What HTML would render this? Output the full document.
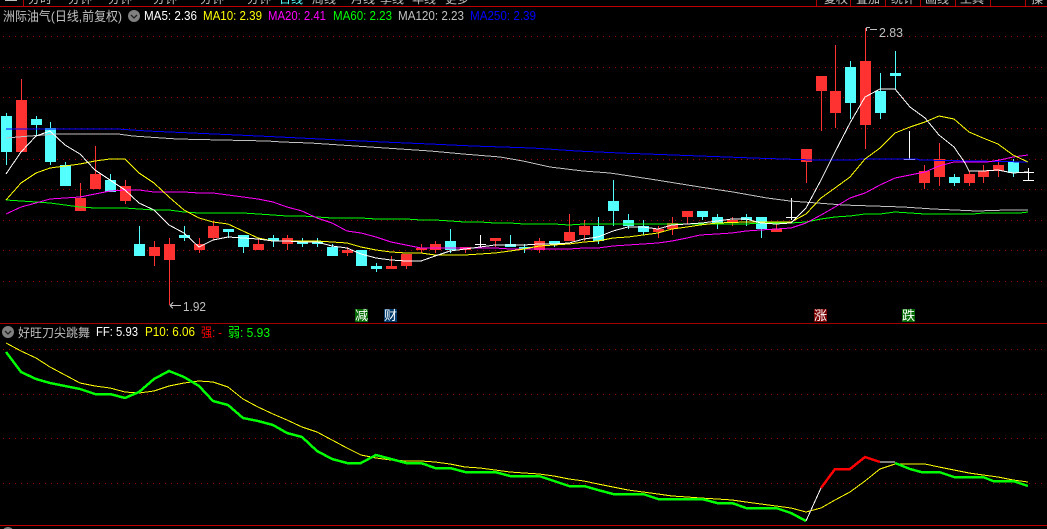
<!DOCTYPE html>
<html><head><meta charset="utf-8"><style>
html,body{margin:0;padding:0;background:#000;width:1047px;height:529px;overflow:hidden}
svg{display:block}
text{font-family:"Liberation Sans","WenQuanYi Zen Hei","Noto Sans CJK SC",sans-serif}
.l{fill:none;shape-rendering:crispEdges;stroke-linejoin:miter}
.g{stroke:#a00000;stroke-width:1;stroke-dasharray:1 5;shape-rendering:crispEdges}
</style></head><body>
<svg width="1047" height="529" viewBox="0 0 1047 529" xmlns="http://www.w3.org/2000/svg">
<defs><clipPath id="t"><rect x="0" y="0" width="1047" height="6"/></clipPath><clipPath id="b"><rect x="0" y="526" width="1047" height="3"/></clipPath></defs>
<rect width="1047" height="529" fill="#000"/>
<g clip-path="url(#t)" font-size="12" fill="#c0c0c0">
<rect x="5" y="0" width="12" height="1" fill="#c0c0c0"/>
<text x="28" y="3">分时</text><text x="68" y="3">分钟</text><text x="108" y="3">分钟</text><text x="153" y="3">分钟</text><text x="200" y="3">分钟</text><text x="247" y="3">分钟</text><text x="279" y="3" fill="#54ffff">日线</text><text x="312" y="3">周线</text><text x="351" y="3">月线</text><text x="380" y="3">季线</text><text x="412" y="3">年线</text><text x="445" y="3">更多</text>
<text x="824" y="3">复权</text><text x="856" y="3">叠加</text><text x="891" y="3">统计</text><text x="925" y="3">画线</text><text x="960" y="3">工具</text><text x="1031" y="3">操</text>
</g>
<g shape-rendering="crispEdges" fill="#b00000">
<rect x="0" y="6" width="1047" height="1" fill="#c00000"/>
<rect x="23" y="0" width="1" height="6"/><rect x="816" y="0" width="1" height="6"/><rect x="850" y="0" width="1" height="6"/><rect x="885" y="0" width="1" height="6"/><rect x="920" y="0" width="1" height="6"/><rect x="955" y="0" width="1" height="6"/><rect x="990" y="0" width="1" height="6"/><rect x="1025" y="0" width="1" height="6"/>
<rect x="0" y="323" width="1047" height="1" fill="#a00000"/>
<rect x="0" y="525" width="1047" height="1" fill="#c00000"/>
</g>
<path class="g" d="M3 36.500H1047M3 67.500H1047M3 97.500H1047M3 128.500H1047M3 159.500H1047M3 189.500H1047M3 220.500H1047M3 250.500H1047M3 281.500H1047M3 349.500H1047M3 394.500H1047M3 438.500H1047M3 483.500H1047"/>

<!-- wicks -->
<path class="l" stroke="#54ffff" d="M6.500 113V165M36.500 116V136M50.500 122V165M65.500 162V186M110.500 174V192M139.500 226V256M184.500 226V241M228.500 229V238M243.500 235V253M273.500 235V247M302.500 238V247M317.500 238V247M332.500 244V256M361.500 250V266M376.500 263V272M450.500 229V253M510.500 235V247M524.500 244V253M554.500 241V247M598.500 217V244M613.500 180V226M628.500 214V229M643.500 220V235M702.500 211V220M717.500 214V229M746.500 214V226M761.500 217V238M850.500 61V119M880.500 73V119M895.500 51V90M954.500 174V186M1013.500 159V177"/>
<path class="l" stroke="#ff3232" d="M21.500 79V152M80.500 183V211M95.500 146V189M125.500 180V204M154.500 241V266M169.500 238V305M199.500 238V253M213.500 221V240M258.500 238V250M287.500 235V250M347.500 247V256M391.500 256V269M406.500 254V269M421.500 244V253M435.500 241V253M465.500 247V253M495.500 238V247M539.500 238V253M569.500 214V241M584.500 220V241M658.500 226V238M672.500 217V235M687.500 211V224M732.500 217V226M776.500 224V232M806.500 149V183M821.500 91V131M835.500 45V128M865.500 28V149M924.500 165V189M939.500 143V186M969.500 171V186M983.500 165V183M998.500 159V177"/>
<!-- bodies -->
<path shape-rendering="crispEdges" fill="#54ffff" d="M1 116h11V152h-11zM31 119h11V125h-11zM45 128h11V162h-11zM60 165h11V186h-11zM105 180h11V192h-11zM134 244h11V256h-11zM179 235h11V238h-11zM223 229h11V232h-11zM238 235h11V247h-11zM268 238h11V241h-11zM297 241h11V244h-11zM312 241h11V244h-11zM327 247h11V256h-11zM356 250h11V266h-11zM371 266h11V269h-11zM445 241h11V250h-11zM505 244h11V247h-11zM519 247h11V249h-11zM549 241h11V244h-11zM593 226h11V241h-11zM608 201h11V211h-11zM623 220h11V226h-11zM638 226h11V232h-11zM697 211h11V217h-11zM712 217h11V223h-11zM741 217h11V220h-11zM756 217h11V229h-11zM845 67h11V103h-11zM875 91h11V113h-11zM890 73h11V76h-11zM949 177h11V183h-11zM1008 162h11V173h-11z"/>
<path shape-rendering="crispEdges" fill="#ff3232" d="M16 100h11V152h-11zM75 198h11V211h-11zM90 174h11V189h-11zM120 186h11V201h-11zM149 247h11V256h-11zM164 244h11V260h-11zM194 244h11V250h-11zM208 226h11V238h-11zM253 244h11V250h-11zM282 238h11V244h-11zM342 250h11V253h-11zM386 266h11V269h-11zM401 254h11V266h-11zM416 248h11V250h-11zM430 244h11V250h-11zM460 247h11V250h-11zM490 238h11V241h-11zM534 241h11V250h-11zM564 232h11V241h-11zM579 226h11V235h-11zM653 229h11V232h-11zM667 223h11V229h-11zM682 211h11V217h-11zM727 220h11V223h-11zM771 229h11V232h-11zM801 149h11V162h-11zM816 76h11V91h-11zM830 91h11V113h-11zM860 61h11V125h-11zM919 171h11V183h-11zM934 159h11V177h-11zM964 174h11V183h-11zM978 171h11V177h-11zM993 165h11V171h-11z"/>
<path class="l" stroke="#fff" d="M480.500 235V248M475 244.500H486M791.500 198V220M786 217.500H797M909.500 131V159M904 159.500H915M1028.500 168V180M1023 180.500H1034M1023 172.500H1034"/>

<!-- MA250 -->
<polyline class="l" stroke="#0000ff" stroke-width="1" points="6,129 117,129 147,131 192,133 237,135 280,137 340,140 383,142 430,144 473,146 532,148 577,151 620,153 700,156 753,158 813,160 857,160 860,159 917,159 920,160 1027,162"/>
<!-- MA120 -->
<polyline class="l" stroke="#c0c0c0" stroke-width="1" points="6,138 30,136 58,134 118,134 133,136 162,138 177,139 221,140 267,141 282,142 310,143 340,145 370,147 400,149 430,151 463,154 500,157 523,161 550,167 583,171 610,173 650,179 700,187 733,192 767,198 790,201 817,203 843,205 873,206 903,207 933,209 977,211 1007,210 1028,210"/>
<!-- MA60 -->
<polyline class="l" stroke="#00ff00" stroke-width="1" points="6,200 21,201 36,202 50,203 65,205 80,207 95,208 125,208 139,209 154,210 169,210 184,212 199,213 243,213 258,214 273,215 287,216 302,216 317,217 332,218 361,218 376,219 406,219 421,220 435,220 450,221 465,222 480,222 495,223 510,223 524,224 554,224 569,225 584,224 746,224 761,223 791,223 806,222 821,219 835,217 850,216 865,214 880,214 895,212 910,213 925,214 973,214 983,213 1020,213 1028,212"/>
<!-- MA20 -->
<polyline class="l" stroke="#ff00ff" stroke-width="1" points="6,214 21,207 36,203 50,199 65,198 80,197 95,194 110,191 125,190 139,190 154,192 184,192 199,193 213,193 228,195 243,197 258,199 273,202 287,207 302,211 317,218 332,223 347,231 361,233 376,237 391,242 406,245 421,248 495,248 510,249 569,249 584,248 598,248 613,246 628,245 643,244 658,243 672,241 687,238 700,235 717,234 732,233 746,231 761,230 776,229 791,228 806,223 821,215 835,207 850,198 865,193 880,185 895,178 910,175 925,172 939,166 954,162 987,162 1000,160 1013,157 1028,155"/>
<!-- MA10 -->
<polyline class="l" stroke="#ffff00" stroke-width="1" points="6,200 21,183 36,173 50,168 65,166 80,164 95,161 110,159 125,159 139,173 154,183 169,197 184,210 199,218 213,222 228,224 243,231 258,238 273,241 317,241 332,242 347,243 361,247 376,250 391,252 406,253 421,253 435,255 465,255 480,254 495,253 510,251 524,249 539,246 554,245 569,244 584,242 598,241 613,238 628,237 643,235 658,233 672,229 687,227 700,225 717,223 746,222 791,222 806,214 821,198 835,188 850,177 865,159 880,148 895,133 910,127 925,122 939,116 954,119 969,132 983,138 998,144 1013,155 1028,162"/>
<!-- MA5 -->
<polyline class="l" stroke="#ffffff" stroke-width="1" points="6,174 21,152 36,136 50,131 65,145 80,154 95,170 110,180 125,190 139,203 154,210 169,225 184,233 199,247 213,240 228,237 243,238 258,239 273,241 287,241 302,242 317,242 332,246 347,248 361,254 376,258 391,260 406,261 421,261 435,256 450,251 465,249 480,247 495,245 524,245 539,244 554,244 569,243 584,239 598,237 613,231 628,227 643,227 658,229 672,225 687,224 702,223 717,221 732,219 746,219 761,223 776,224 791,223 806,208 821,180 835,152 850,123 865,97 880,89 895,89 910,107 925,118 939,135 954,147 965,163 969,171 983,171 998,170 1013,173 1028,172"/>

<!-- header text -->
<text x="3" y="21" font-size="13" fill="#c0c0c0" textLength="119" lengthAdjust="spacingAndGlyphs">洲际油气(日线,前复权)</text>
<circle cx="134" cy="16" r="6" fill="#808080"/>
<path d="M131 15l3 3 3-3" fill="none" stroke="#222" stroke-width="1.300"/>
<g font-size="13">
<text x="144" y="20" fill="#fff" textLength="53" lengthAdjust="spacingAndGlyphs">MA5: 2.36</text>
<text x="203" y="20" fill="#ffff00" textLength="59" lengthAdjust="spacingAndGlyphs">MA10: 2.39</text>
<text x="268" y="20" fill="#ff00ff" textLength="58" lengthAdjust="spacingAndGlyphs">MA20: 2.41</text>
<text x="333" y="20" fill="#00ff00" textLength="59" lengthAdjust="spacingAndGlyphs">MA60: 2.23</text>
<text x="398" y="20" fill="#c0c0c0" textLength="66" lengthAdjust="spacingAndGlyphs">MA120: 2.23</text>
<text x="470" y="20" fill="#0000ff" textLength="66" lengthAdjust="spacingAndGlyphs">MA250: 2.39</text>
</g>

<!-- price annotations -->
<g fill="none" stroke="#c0c0c0" stroke-width="1" shape-rendering="crispEdges">
<path d="M866.500 27.500H870M866.500 27.500V31M870 29.500H877"/>
<path d="M170 305.500H181M170 305.500L173 302.500M170 305.500L173 308.500"/>
</g>
<text x="879" y="37" font-size="13" fill="#c0c0c0" textLength="24" lengthAdjust="spacingAndGlyphs">2.83</text>
<text x="183" y="311" font-size="13" fill="#c0c0c0" textLength="23" lengthAdjust="spacingAndGlyphs">1.92</text>

<!-- signal labels -->
<g shape-rendering="crispEdges">
<rect x="355" y="309" width="13" height="13" fill="#006a00"/>
<rect x="384" y="309" width="13" height="13" fill="#003a6a"/>
<rect x="814" y="309" width="13" height="13" fill="#7a0000"/>
<rect x="902" y="309" width="13" height="13" fill="#006a00"/>
</g>
<g font-size="13" fill="#fff">
<text x="355" y="320">减</text><text x="384" y="320">财</text><text x="814" y="320">涨</text><text x="902" y="320">跌</text>
</g>

<!-- lower panel header -->
<circle cx="8" cy="332" r="6" fill="#808080"/>
<path d="M5 331l3 3 3-3" fill="none" stroke="#222" stroke-width="1.300"/>
<text x="18" y="337" font-size="12" fill="#c0c0c0" textLength="72" lengthAdjust="spacingAndGlyphs">好旺刀尖跳舞</text>
<g font-size="13">
<text x="96" y="336" fill="#fff" textLength="42" lengthAdjust="spacingAndGlyphs">FF: 5.93</text>
<text x="145" y="336" fill="#ffff00" textLength="50" lengthAdjust="spacingAndGlyphs">P10: 6.06</text>
<text x="201" y="337" fill="#ff0000" textLength="21" lengthAdjust="spacingAndGlyphs">强: -</text>
<text x="228" y="337" fill="#00ff00" textLength="42" lengthAdjust="spacingAndGlyphs">弱: 5.93</text>
</g>

<!-- P10 -->
<polyline class="l" stroke="#ffff00" stroke-width="1" points="6,343 21,351 36,358 50,367 65,375 80,383 95,386 110,388 125,392 139,393 154,391 169,386 184,383 199,381 213,382 228,387 243,399 258,407 273,414 287,420 302,427 317,432 332,440 347,448 361,455 376,458 391,460 406,461 421,461 435,462 450,464 465,467 480,468 495,470 510,472 524,473 539,474 554,476 569,479 584,481 598,484 613,487 628,490 643,492 658,494 672,496 687,497 700,498 717,499 732,500 746,502 761,504 776,506 791,508 806,512 821,508 835,500 850,492 865,481 880,469 895,464 925,464 939,467 954,470 969,473 983,475 998,477 1013,480 1028,482"/>
<!-- FF -->
<polyline class="l" stroke="#00ff00" stroke-width="2.500" points="6,352 21,372 36,379 50,383 65,386 80,389 95,394 110,394 125,398 139,392 154,379 169,371 184,377 199,386 213,401 228,405 243,418 258,421 273,425 287,433 302,437 317,451 332,459 347,463 361,463 376,455 391,459 406,463 421,463 435,468 450,468 465,472 495,472 510,476 539,476 554,481 569,486 584,486 598,490 613,494 643,494 658,499 702,499 717,503 732,503 746,508 776,508 791,513 806,521"/>
<polyline class="l" stroke="#ffffff" stroke-width="1" points="806,521 821,488"/>
<polyline class="l" stroke="#ff0000" stroke-width="2.500" points="821,488 835,469 850,469 865,457 880,462"/>
<polyline class="l" stroke="#ffffff" stroke-width="1" points="880,462 895,462"/>
<polyline class="l" stroke="#00ff00" stroke-width="2.500" points="895,463 910,469 921,472 939,472 954,477 983,477 993,481 1013,481 1028,486"/>

<g clip-path="url(#b)"><circle cx="8" cy="533" r="6" fill="#808080"/></g>
</svg>
</body></html>
